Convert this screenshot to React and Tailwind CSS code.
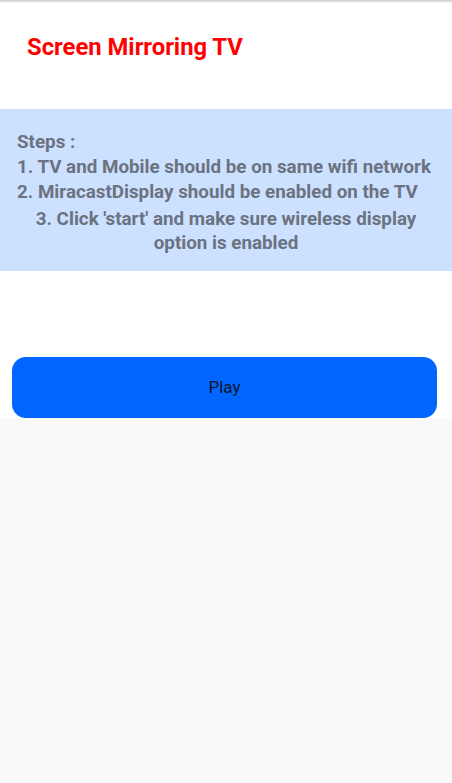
export default function App() {
  return (
    <div className="min-h-[783px] bg-[#f9f9f9] font-['Roboto',sans-serif]">
      <div className="bg-white">
        <div className="h-[3px] bg-gradient-to-b from-[#c8c8c8] to-white" />
        <div className="h-[106px] pl-[27px] pt-[29px]">
          <h1 className="text-[23.8px] font-bold text-[#ff0000] leading-[30px]">Screen Mirroring TV</h1>
        </div>
        <div className="bg-[#cce0ff] h-[162px] pt-[21px] px-[17px] text-[18.8px] font-bold text-[#6b7280] leading-[25px]">
          <p>Steps :</p>
          <p>1. TV and Mobile should be on same wifi network</p>
          <p>2. MiracastDisplay should be enabled on the TV</p>
          <p className="text-center mt-[2px] leading-[24px]">3. Click 'start' and make sure wireless display option is enabled</p>
        </div>
        <div className="h-[86px]" />
        <div className="pl-[12px] pr-[15px]">
          <button className="w-full h-[61px] rounded-[14px] bg-[#0066ff] text-[17px] text-[#0d1426] flex items-center justify-center">Play</button>
        </div>
      </div>
    </div>
  );
}
